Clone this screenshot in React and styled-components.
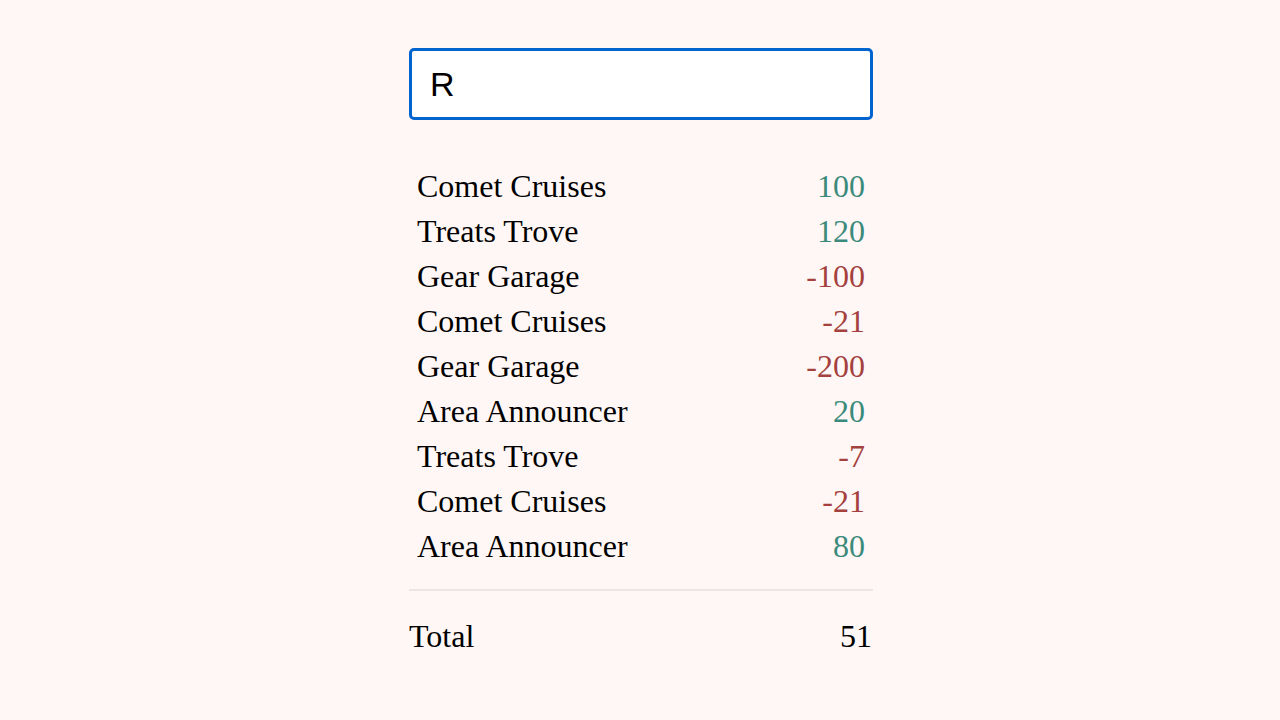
import React, { useState } from 'react';
import styled, { createGlobalStyle, css } from 'styled-components';

const GlobalStyle = createGlobalStyle`
    html, body {
        margin: 0;
        padding: 0;
        background: #fff7f5;
        font-family: "Liberation Serif", "Times New Roman", serif;
    }
`;

const Page = styled.div`
    min-height: 720px;
    display: flex;
    justify-content: center;
    padding-top: 48px;
    box-sizing: border-box;
`;

const Column = styled.div`
    width: 464px;
    margin-left: 2px;
    display: flex;
    flex-direction: column;
`;

const SearchInput = styled.input`
    box-sizing: border-box;
    width: 100%;
    height: 72px;
    border: 3px solid #0064cf;
    border-radius: 5px;
    background: #fff;
    padding: 0 18px;
    font-family: "Liberation Sans", Arial, sans-serif;
    font-size: 34px;
    color: #000;
    outline: none;
    caret-color: #000;
`;

const List = styled.div`
    margin-top: 44px;
    padding: 0 8px 20px;
    display: flex;
    flex-direction: column;
`;

const Row = styled.div`
    height: 45px;
    display: flex;
    align-items: center;
    justify-content: space-between;
    font-size: 32px;
    color: #000;
`;

const Amount = styled.span`
    color: #3b8a7b;
    ${props => props.negative && css`
        color: #a4403d;
    `}
`;

const Divider = styled.hr`
    margin: 0;
    border: none;
    border-top: 2px solid #ebe5e4;
`;

const TotalRow = styled(Row)`
    height: 90px;
    padding-right: 1px;
`;

const entries = [
    { name: 'Comet Cruises', amount: 100 },
    { name: 'Treats Trove', amount: 120 },
    { name: 'Gear Garage', amount: -100 },
    { name: 'Comet Cruises', amount: -21 },
    { name: 'Gear Garage', amount: -200 },
    { name: 'Area Announcer', amount: 20 },
    { name: 'Treats Trove', amount: -7 },
    { name: 'Comet Cruises', amount: -21 },
    { name: 'Area Announcer', amount: 80 },
];

export default function App() {
    const [query, setQuery] = useState('R');
    return (
        <Page>
            <GlobalStyle />
            <Column>
                <SearchInput
                    autoFocus
                    value={query}
                    onChange={e => setQuery(e.target.value)}
                />
                <List>
                    {entries.map((e, i) => (
                        <Row key={i}>
                            <span>{e.name}</span>
                            <Amount negative={e.amount < 0}>{e.amount}</Amount>
                        </Row>
                    ))}
                </List>
                <Divider />
                <TotalRow>
                    <span>Total</span>
                    <span>51</span>
                </TotalRow>
            </Column>
        </Page>
    );
}
